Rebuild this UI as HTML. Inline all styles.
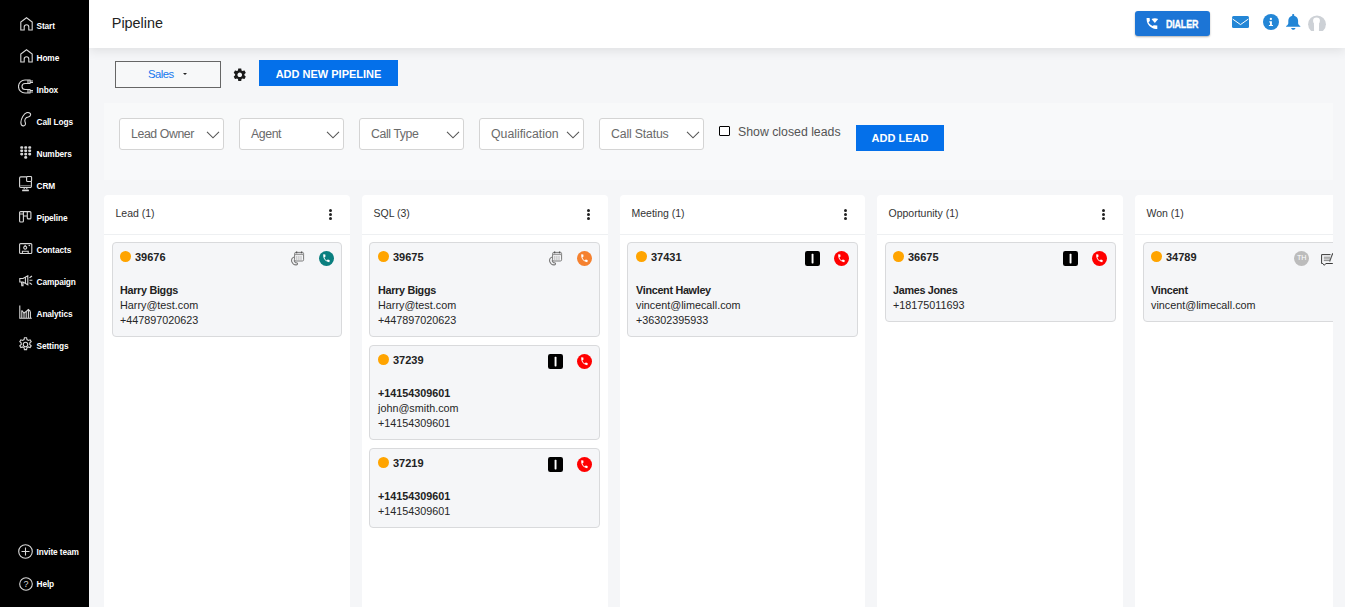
<!DOCTYPE html>
<html><head><meta charset="utf-8">
<style>
*{box-sizing:border-box;margin:0;padding:0}
html,body{width:1345px;height:607px;overflow:hidden;background:#f5f6f8;font-family:"Liberation Sans",sans-serif;color:#222}
#side{position:absolute;left:0;top:0;width:89px;height:607px;background:#000}
.si{position:absolute;line-height:0}
.sl{position:absolute;left:36.5px;height:12px;line-height:12px;color:#fff;font-weight:bold;font-size:8.3px;white-space:nowrap;letter-spacing:-0.1px}
#hdr{position:absolute;left:89px;top:0;width:1256px;height:48px;background:#fff;box-shadow:0 3px 10px rgba(0,0,0,.09);z-index:2}
#title{position:absolute;left:22.8px;top:14.6px;font-size:14.4px;line-height:16px;color:#222}
#dialer{position:absolute;left:1046px;top:11px;width:75px;height:25px;background:#1c75d6;border-radius:3px;box-shadow:0 1px 2px rgba(0,0,0,.3);color:#fff;font-weight:bold;font-size:10.5px;letter-spacing:-0.2px}
#dialer span{position:absolute;left:30.5px;top:7px;line-height:12px;transform:scaleX(0.85);transform-origin:0 0;-webkit-text-stroke:0.3px #fff}
#dialer svg{position:absolute;left:10.5px;top:7px}
.hi{position:absolute;line-height:0}
#main{position:absolute;left:89px;top:48px;width:1256px;height:559px;background:#f5f6f8}
.sales{position:absolute;left:26px;top:13px;width:106px;height:27px;border:1px solid #666;background:#f7f8f9}
.sales span{position:absolute;left:32px;top:5.5px;font-size:11.3px;line-height:13px;color:#1577ee;letter-spacing:-0.5px}
.sales i{position:absolute;left:67px;top:11.2px;width:0;height:0;border-left:2.8px solid transparent;border-right:2.8px solid transparent;border-top:2.8px solid #222}
.gear{position:absolute;left:143px;top:18.8px;line-height:0}
.btn{position:absolute;background:#0470ea;color:#fff;font-weight:bold;text-align:center}
#filters{position:absolute;left:15px;top:55px;width:1229px;height:77px;background:#f8f9fa}
.dd{position:absolute;top:15px;width:105px;height:32px;background:#fff;border:1px solid #d4d4d4;border-radius:3px;font-size:12.3px;color:#6a6a6a;letter-spacing:-0.4px}
.dd span{position:absolute;left:11px;top:8px;line-height:14px;white-space:nowrap}
.dd svg{position:absolute;left:86px;top:11.8px}
.chk{position:absolute;left:615px;top:23px;width:11px;height:10px;border:1px solid #000;border-radius:1px;background:#fff}
.chkl{position:absolute;left:634px;top:21.8px;font-size:12.3px;line-height:14px;color:#555}
#cols{position:absolute;left:15px;top:147px;width:1229px;height:412px;overflow:hidden}
.col{position:absolute;top:0;height:420px;background:#fff;border-radius:4px}
.colh{position:absolute;left:0;top:0;width:100%;height:40px;border-bottom:1px solid #eef0f2}
.colh .t{position:absolute;left:11.5px;top:12px;font-size:10.5px;line-height:13px;color:#333;white-space:nowrap}
.kebab{position:absolute;right:18px;top:14px;width:3px;height:11px}
.kebab i{display:block;width:3px;height:3px;border-radius:50%;background:#222;margin-bottom:1px}
.card{position:absolute;left:8px;width:230px;background:#f5f6f8;border:1px solid #d9dadc;border-radius:4px}
.dot{position:absolute;left:7px;top:8px;width:11.2px;height:11.3px;border-radius:50%;background:#ffa400}
.num{position:absolute;left:22px;top:8px;font-weight:bold;font-size:11px;line-height:13px;color:#222}
.icw{position:absolute;top:8px;line-height:0}
.lines{position:absolute;left:7px;top:40px;font-size:10.8px;line-height:15px;color:#262626;white-space:nowrap}
.lines b{color:#222;letter-spacing:-0.3px}
</style></head><body>
<div id="side">
<div class="si" style="left:19.5px;top:16.8px"><svg width="13" height="14" viewBox="0 0 13 14"><path fill="none" stroke="#d8d8d8" stroke-width="1.1" d="M0.8 13 V5 L6.5 0.8 L12.2 5 V13 H8.8 V10 A2.3 2.3 0 0 0 4.2 10 V13 Z"/></svg></div><div class="sl" style="top:19.8px">Start</div>
<div class="si" style="left:19.5px;top:48.8px"><svg width="13" height="14" viewBox="0 0 13 14"><path fill="none" stroke="#d8d8d8" stroke-width="1.1" d="M0.8 13 V5 L6.5 0.8 L12.2 5 V13 H8.8 V10 A2.3 2.3 0 0 0 4.2 10 V13 Z"/></svg></div><div class="sl" style="top:51.8px">Home</div>
<div class="si" style="left:17.5px;top:79.3px"><svg width="16" height="15" viewBox="0 0 16 15"><path fill="none" stroke="#d8d8d8" stroke-width="1.1" d="M12 1 H7 A6.3 6.3 0 0 0 7 14 H12 V10.5 H7 A3 3 0 0 1 7 4.5 H12 Z"/><path fill="none" stroke="#d8d8d8" stroke-width="1.1" d="M10 1 V4.5 M10 10.5 V14 M12 2 H15 M12 3.5 H15 M12 11.5 H15 M12 13 H15"/></svg></div><div class="sl" style="top:83.8px">Inbox</div>
<div class="si" style="left:20px;top:112.3px"><svg width="12" height="15" viewBox="0 0 12 15"><path fill="none" stroke="#d8d8d8" stroke-width="1.1" d="M7 0.6 C9 0.3 10.8 1.2 10.6 2.8 C10.4 4.3 9 5 7.6 5.2 L6.3 5.6 C5.2 6.5 4.6 8.2 5 9.6 L5.4 11 C5.8 12.5 4.8 14 3.4 13.9 C1.8 13.8 0.8 12.2 0.9 10.3 C1.1 6.8 3.6 1.8 7 0.6 Z"/></svg></div><div class="sl" style="top:115.8px">Call Logs</div>
<div class="si" style="left:20px;top:145.8px"><svg width="12" height="13" viewBox="0 0 12 13"><rect x="0.2" y="0.2" width="3" height="2.6" rx="1.1" fill="#d8d8d8"/><rect x="0.2" y="3.5" width="3" height="2.6" rx="1.1" fill="#d8d8d8"/><rect x="0.2" y="6.8" width="3" height="2.6" rx="1.1" fill="#d8d8d8"/><rect x="4.2" y="0.2" width="3" height="2.6" rx="1.1" fill="#d8d8d8"/><rect x="4.2" y="3.5" width="3" height="2.6" rx="1.1" fill="#d8d8d8"/><rect x="4.2" y="6.8" width="3" height="2.6" rx="1.1" fill="#d8d8d8"/><rect x="8.2" y="0.2" width="3" height="2.6" rx="1.1" fill="#d8d8d8"/><rect x="8.2" y="3.5" width="3" height="2.6" rx="1.1" fill="#d8d8d8"/><rect x="8.2" y="6.8" width="3" height="2.6" rx="1.1" fill="#d8d8d8"/><rect x="4.2" y="10.1" width="3" height="2.6" rx="1.3" fill="#d8d8d8"/></svg></div><div class="sl" style="top:147.8px">Numbers</div>
<div class="si" style="left:19px;top:176.3px"><svg width="14" height="16" viewBox="0 0 14 16"><path fill="none" stroke="#d8d8d8" stroke-width="1.1" d="M7.6 0.9 H1.8 A1.2 1.2 0 0 0 0.6 2.1 V10.3 A1.2 1.2 0 0 0 1.8 11.5 H11.2 A1.2 1.2 0 0 0 12.4 10.3 V5.4"/><rect fill="none" stroke="#d8d8d8" stroke-width="1.1" x="7.6" y="0.5" width="5" height="5" rx="1"/><path d="M1.2 9.8 H11.8" stroke="#9a9a9a" stroke-width="1"/><path fill="none" stroke="#d8d8d8" stroke-width="1.1" d="M5.2 11.8 V13 M7.8 11.8 V13"/><path d="M3.9 14.4 H9.1" stroke="#d8d8d8" stroke-width="1.7" stroke-linecap="round"/></svg></div><div class="sl" style="top:179.8px">CRM</div>
<div class="si" style="left:19px;top:211.3px"><svg width="13" height="12" viewBox="0 0 13 12"><path fill="none" stroke="#d8d8d8" stroke-width="1.1" d="M1.6 0.6 H10.9 A1 1 0 0 1 11.9 1.6 V6.9 A1 1 0 0 1 10.9 7.9 H9.3 A1 1 0 0 1 8.3 6.9 V0.6 M8.3 4.2 A0.8 0.8 0 0 1 7.5 5 H5.2 A0.8 0.8 0 0 1 4.4 4.2 V0.6 M4.4 10 A1 1 0 0 1 3.4 11 H1.6 A1 1 0 0 1 0.6 10 V1.6 A1 1 0 0 1 1.6 0.6 M0.8 3 H4.2 M4.4 2 V10.6"/></svg></div><div class="sl" style="top:211.8px">Pipeline</div>
<div class="si" style="left:18.8px;top:243.3px"><svg width="14" height="12" viewBox="0 0 14 12"><rect fill="none" stroke="#d8d8d8" stroke-width="1.1" x="0.6" y="0.6" width="12.2" height="9.9" rx="1"/><path fill="none" stroke="#d8d8d8" stroke-width="1.1" d="M6.2 2.6 L7.6 4.1 A1.5 1.5 0 1 1 4.8 4.1 Z"/><path fill="none" stroke="#d8d8d8" stroke-width="1.1" d="M3.4 10.4 V8.2 H9.2 V10.4"/><circle cx="10.3" cy="2.5" r="0.8" fill="#d8d8d8"/></svg></div><div class="sl" style="top:243.8px">Contacts</div>
<div class="si" style="left:18.5px;top:275.0px"><svg width="14" height="12" viewBox="0 0 14 12"><path fill="none" stroke="#d8d8d8" stroke-width="1.1" d="M0.8 3.5 H4 L8.8 0.8 V9.8 L4 7 H0.8 Z M2.5 7 L2.8 10.8 H4 L4 7"/><path fill="none" stroke="#d8d8d8" stroke-width="1.1" d="M6.4 2 V8.5 M10.5 2.8 L13 1 M10.5 5.3 H13.4 M10.5 7.8 L13 9.6"/></svg></div><div class="sl" style="top:275.8px">Campaign</div>
<div class="si" style="left:19px;top:305.3px"><svg width="13" height="14" viewBox="0 0 13 14"><path fill="none" stroke="#d8d8d8" stroke-width="1.1" d="M0.8 0.5 V13.2 H12.8"/><path fill="none" stroke="#d8d8d8" stroke-width="1.1" d="M2.8 13 V5.5 M5 13 V8 M7.2 13 V6.5 M9.4 13 V4.5 M11.4 13 V6.5"/><path fill="none" stroke="#d8d8d8" stroke-width="1.1" d="M2.8 5.5 L5 8 L7.2 6.5 L9.4 4.5 L11.4 6.5"/></svg></div><div class="sl" style="top:307.8px">Analytics</div>
<div class="si" style="left:17.8px;top:337.3px"><svg width="15" height="15" viewBox="0 0 24 24"><path fill="none" stroke="#d8d8d8" stroke-width="1.8" d="M10.3 1.2 h3.4 l0.6 3 a8 8 0 0 1 2.2 1.3 l2.9-1 1.7 2.9-2.3 2 a8 8 0 0 1 0 2.6 l2.3 2-1.7 2.9-2.9-1 a8 8 0 0 1-2.2 1.3 l-0.6 3 h-3.4 l-0.6-3 a8 8 0 0 1-2.2-1.3 l-2.9 1-1.7-2.9 2.3-2 a8 8 0 0 1 0-2.6 l-2.3-2 1.7-2.9 2.9 1 a8 8 0 0 1 2.2-1.3 z"/><circle cx="12" cy="12" r="3.6" fill="none" stroke="#d8d8d8" stroke-width="1.8"/></svg></div><div class="sl" style="top:339.8px">Settings</div>
<div class="si" style="left:18px;top:544px"><svg width="15" height="15" viewBox="0 0 15 15"><circle fill="none" stroke="#d8d8d8" stroke-width="1.1" cx="7.5" cy="7.5" r="6.8"/><path fill="none" stroke="#d8d8d8" stroke-width="1.1" d="M7.5 3.5 V11.5 M3.5 7.5 H11.5"/></svg></div><div class="sl" style="top:545.8px">Invite team</div>
<div class="si" style="left:18.5px;top:576.5px"><svg width="14" height="14" viewBox="0 0 14 14"><circle fill="none" stroke="#d8d8d8" stroke-width="1.1" cx="7" cy="7" r="6.3"/><text x="7" y="10.3" text-anchor="middle" font-family="Liberation Sans" font-size="9" fill="#d8d8d8">?</text></svg></div><div class="sl" style="top:577.8px">Help</div>
</div>
<div id="hdr"><div id="title">Pipeline</div>
<div id="dialer"><svg width="13" height="12" viewBox="0 0 13 12"><path fill="#fff" d="M0.6 0 H3.6 L3.9 3.1 L2.5 4.3 C3.3 5.9 4.9 7.3 6.6 8 L7.8 7.3 L11.3 7.5 V10.9 H10 C4.8 10.6 0.8 6.4 0.6 1.2 Z"/><path fill="#fff" d="M5.5 1.1 Q8.85 -0.7 12.2 1.1 L8.85 4.9 Z"/></svg><span>DIALER</span></div>
<div class="hi" style="left:1143px;top:16px"><svg width="17" height="12" viewBox="0 0 17 12"><rect x="0" y="0" width="17" height="12" rx="1.5" fill="#2386d6"/><path d="M0.6 3 L8.5 8.6 L16.4 3" fill="none" stroke="#fff" stroke-width="1"/></svg></div>
<div class="hi" style="left:1174px;top:14px"><svg width="16" height="16" viewBox="0 0 16 16"><circle cx="8" cy="8" r="8" fill="#2386d6"/><circle cx="7.9" cy="4.9" r="1.15" fill="#fff"/><path fill="#fff" d="M6.3 7.2 H8.9 V10.9 H10 V12.1 H5.9 V10.9 H7 V8.5 H6.3 Z"/></svg></div>
<div class="hi" style="left:1197px;top:13px"><svg width="15" height="18" viewBox="0 0 15 18"><path fill="#2386d6" d="M6.2 1.8 C6.2 1.2 6.6 1 7.2 1 C7.8 1 8.2 1.2 8.2 1.8 V2.8 C10.6 3.4 12.1 5.4 12.1 7.7 V10.1 C12.1 11.1 12.6 11.9 13.4 12.5 L14.3 13.1 V13.8 H0.1 V13.1 L1 12.5 C1.8 11.9 2.3 11.1 2.3 10.1 V7.7 C2.3 5.4 3.8 3.4 6.2 2.8 Z M5.1 15 H9.5 C9.3 16.1 8.3 16.8 7.3 16.8 C6.3 16.8 5.3 16.1 5.1 15 Z"/></svg></div>
<div class="hi" style="left:1219px;top:14.5px"><svg width="18" height="17" viewBox="0 0 18 17"><circle cx="9" cy="9.3" r="8.9" fill="#cdd1d6"/><ellipse cx="8.5" cy="5.8" rx="3.4" ry="3.3" fill="#fff"/><path d="M5.9 7 H11.1 L10.9 17 H6.1 Z" fill="#fff"/><rect x="0" y="16" width="18" height="2" fill="#fff"/></svg></div>
</div>
<div id="main">
<div class="sales"><span>Sales</span><i></i></div>
<div class="gear"><svg width="15.5" height="15.5" viewBox="0 0 24 24"><path fill="#1a1a1a" d="M19.14,12.94c0.04-0.3,0.06-0.61,0.06-0.94c0-0.32-0.02-0.64-0.07-0.94l2.03-1.58c0.18-0.14,0.23-0.41,0.12-0.61 l-1.92-3.32c-0.12-0.22-0.37-0.29-0.59-0.22l-2.39,0.96c-0.5-0.38-1.03-0.7-1.62-0.94L14.4,2.81c-0.04-0.24-0.24-0.41-0.48-0.41 h-3.84c-0.24,0-0.43,0.17-0.47,0.41L9.25,5.35C8.66,5.59,8.12,5.920,7.63,6.29L5.24,5.33c-0.22-0.08-0.47,0-0.59,0.22L2.74,8.87 C2.620,9.08,2.66,9.34,2.86,9.48l2.03,1.58C4.84,11.36,4.8,11.69,4.8,12s0.02,0.64,0.07,0.94l-2.03,1.58 c-0.18,0.14-0.23,0.41-0.12,0.61l1.92,3.32c0.12,0.22,0.37,0.29,0.59,0.22l2.39-0.96c0.5,0.38,1.03,0.7,1.62,0.94l0.36,2.54 c0.05,0.24,0.24,0.41,0.48,0.41h3.84c0.24,0,0.44-0.17,0.47-0.41l0.36-2.54c0.59-0.24,1.130-0.56,1.62-0.94l2.39,0.96 c0.22,0.08,0.47,0,0.59-0.22l1.92-3.32c0.12-0.22,0.07-0.47-0.12-0.61L19.14,12.94z M12,15.6c-1.98,0-3.6-1.62-3.6-3.6 s1.62-3.6,3.6-3.6s3.6,1.62,3.6,3.6S13.98,15.6,12,15.6z"/></svg></div>
<div class="btn" style="left:170px;top:12px;width:139px;height:26px;font-size:11px;line-height:26px"><span style="position:relative;top:1px">ADD NEW PIPELINE</span></div>
<div id="filters">
<div class="dd" style="left:15px"><span style="letter-spacing:-0.4px">Lead Owner</span><svg width="14" height="9" viewBox="0 0 14 9"><path d="M1 0.8 L7 6.8 L13 0.8" fill="none" stroke="#555" stroke-width="1.1"/></svg></div><div class="dd" style="left:135px"><span style="letter-spacing:-0.4px">Agent</span><svg width="14" height="9" viewBox="0 0 14 9"><path d="M1 0.8 L7 6.8 L13 0.8" fill="none" stroke="#555" stroke-width="1.1"/></svg></div><div class="dd" style="left:255px"><span style="letter-spacing:-0.4px">Call Type</span><svg width="14" height="9" viewBox="0 0 14 9"><path d="M1 0.8 L7 6.8 L13 0.8" fill="none" stroke="#555" stroke-width="1.1"/></svg></div><div class="dd" style="left:375px"><span style="letter-spacing:0px">Qualification</span><svg width="14" height="9" viewBox="0 0 14 9"><path d="M1 0.8 L7 6.8 L13 0.8" fill="none" stroke="#555" stroke-width="1.1"/></svg></div><div class="dd" style="left:495px"><span style="letter-spacing:-0.17px">Call Status</span><svg width="14" height="9" viewBox="0 0 14 9"><path d="M1 0.8 L7 6.8 L13 0.8" fill="none" stroke="#555" stroke-width="1.1"/></svg></div>
<div class="chk"></div><div class="chkl">Show closed leads</div>
<div class="btn" style="left:752px;top:22px;width:88px;height:26px;font-size:11px;line-height:26px">ADD LEAD</div>
</div>
<div id="cols">
<div class="col" style="left:0px;width:246px"><div class="colh"><div class="t">Lead (1)</div><div class="kebab"><i></i><i></i><i></i></div></div><div class="card" style="left:8px;width:230px;top:47px;height:95px"><div class="dot" style="left:7px"></div><div class="num" style="left:22px">39676</div><div class="icw" style="left:177px"><svg class="ic" width="15" height="15" viewBox="0 0 15 15"><rect x="4.6" y="1.4" width="9" height="8.6" rx="1.2" fill="none" stroke="#7a7a7a" stroke-width="1"/><path d="M4.6 3.4 H13.6" stroke="#9a9a9a" stroke-width="1.4"/><path d="M6.8 5 V9.3 M8.9 5 V9.3 M11 5 V9.3" stroke="#aaa" stroke-width="0.8"/><path d="M6.6 0.4 V2.2 M11.6 0.4 V2.2" stroke="#555" stroke-width="1.3"/><path d="M4.2 6 C2.6 6.4 0.9 8.2 1.7 10.6 C2.6 12.8 4.6 14 6.2 13.9 C7.2 13.8 7.8 13 7.4 12.3 C6.9 11.6 6 11.9 5.4 11.5 C4.6 10.9 4.1 9.8 4.3 8.9" fill="none" stroke="#7a7a7a" stroke-width="1.1"/></svg></div><div class="icw" style="left:205.5px"><svg class="ic" width="15" height="15" viewBox="0 0 15 15"><circle cx="7.5" cy="7.5" r="7.5" fill="#0a7f7f"/><g transform="translate(7.4,7.2) rotate(8) scale(0.4) translate(-12,-12)"><path fill="#fff" d="M6.62 10.79c1.44 2.83 3.76 5.140 6.59 6.59l2.2-2.2c.27-.27.67-.36 1.02-.24 1.12.37 2.33.57 3.57.57.55 0 1 .45 1 1V20c0 .55-.45 1-1 1-9.390 0-17-7.61-17-17 0-.55.45-1 1-1h3.5c.55 0 1 .45 1 1 0 1.25.2 2.45.57 3.57.11.35.03.74-.25 1.02l-2.2 2.2z"/></g></svg></div><div class="lines" style="left:7px"><b>Harry Biggs</b><br>Harry@test.com<br>+447897020623</div></div></div>
<div class="col" style="left:258px;width:246px"><div class="colh"><div class="t">SQL (3)</div><div class="kebab"><i></i><i></i><i></i></div></div><div class="card" style="left:7px;width:231px;top:47px;height:95px"><div class="dot" style="left:8px"></div><div class="num" style="left:23px">39675</div><div class="icw" style="left:178px"><svg class="ic" width="15" height="15" viewBox="0 0 15 15"><rect x="4.6" y="1.4" width="9" height="8.6" rx="1.2" fill="none" stroke="#7a7a7a" stroke-width="1"/><path d="M4.6 3.4 H13.6" stroke="#9a9a9a" stroke-width="1.4"/><path d="M6.8 5 V9.3 M8.9 5 V9.3 M11 5 V9.3" stroke="#aaa" stroke-width="0.8"/><path d="M6.6 0.4 V2.2 M11.6 0.4 V2.2" stroke="#555" stroke-width="1.3"/><path d="M4.2 6 C2.6 6.4 0.9 8.2 1.7 10.6 C2.6 12.8 4.6 14 6.2 13.9 C7.2 13.8 7.8 13 7.4 12.3 C6.9 11.6 6 11.9 5.4 11.5 C4.6 10.9 4.1 9.8 4.3 8.9" fill="none" stroke="#7a7a7a" stroke-width="1.1"/></svg></div><div class="icw" style="left:206.5px"><svg class="ic" width="15" height="15" viewBox="0 0 15 15"><circle cx="7.5" cy="7.5" r="7.5" fill="#f5812f"/><g transform="translate(7.4,7.2) rotate(8) scale(0.4) translate(-12,-12)"><path fill="#fff" d="M6.62 10.79c1.44 2.83 3.76 5.140 6.59 6.59l2.2-2.2c.27-.27.67-.36 1.02-.24 1.12.37 2.33.57 3.57.57.55 0 1 .45 1 1V20c0 .55-.45 1-1 1-9.390 0-17-7.61-17-17 0-.55.45-1 1-1h3.5c.55 0 1 .45 1 1 0 1.25.2 2.45.57 3.57.11.35.03.74-.25 1.02l-2.2 2.2z"/></g></svg></div><div class="lines" style="left:8px"><b>Harry Biggs</b><br>Harry@test.com<br>+447897020623</div></div><div class="card" style="left:7px;width:231px;top:150px;height:95px"><div class="dot" style="left:8px"></div><div class="num" style="left:23px">37239</div><div class="icw" style="left:178px"><svg class="ic" width="15" height="15" viewBox="0 0 15 15"><rect x="0" y="0" width="15" height="15" rx="2.2" fill="#000"/><rect x="6.6" y="2.8" width="1.9" height="9.6" rx="0.6" fill="#fff"/></svg></div><div class="icw" style="left:206.5px"><svg class="ic" width="15" height="15" viewBox="0 0 15 15"><circle cx="7.5" cy="7.5" r="7.5" fill="#ff0000"/><g transform="translate(7.4,7.2) rotate(8) scale(0.4) translate(-12,-12)"><path fill="#fff" d="M6.62 10.79c1.44 2.83 3.76 5.140 6.59 6.59l2.2-2.2c.27-.27.67-.36 1.02-.24 1.12.37 2.33.57 3.57.57.55 0 1 .45 1 1V20c0 .55-.45 1-1 1-9.390 0-17-7.61-17-17 0-.55.45-1 1-1h3.5c.55 0 1 .45 1 1 0 1.25.2 2.45.57 3.57.11.35.03.74-.25 1.02l-2.2 2.2z"/></g></svg></div><div class="lines" style="left:8px"><b><span style="letter-spacing:0">+14154309601</span></b><br>john@smith.com<br>+14154309601</div></div><div class="card" style="left:7px;width:231px;top:253px;height:80px"><div class="dot" style="left:8px"></div><div class="num" style="left:23px">37219</div><div class="icw" style="left:178px"><svg class="ic" width="15" height="15" viewBox="0 0 15 15"><rect x="0" y="0" width="15" height="15" rx="2.2" fill="#000"/><rect x="6.6" y="2.8" width="1.9" height="9.6" rx="0.6" fill="#fff"/></svg></div><div class="icw" style="left:206.5px"><svg class="ic" width="15" height="15" viewBox="0 0 15 15"><circle cx="7.5" cy="7.5" r="7.5" fill="#ff0000"/><g transform="translate(7.4,7.2) rotate(8) scale(0.4) translate(-12,-12)"><path fill="#fff" d="M6.62 10.79c1.44 2.83 3.76 5.140 6.59 6.59l2.2-2.2c.27-.27.67-.36 1.02-.24 1.12.37 2.33.57 3.57.57.55 0 1 .45 1 1V20c0 .55-.45 1-1 1-9.390 0-17-7.61-17-17 0-.55.45-1 1-1h3.5c.55 0 1 .45 1 1 0 1.25.2 2.45.57 3.57.11.35.03.74-.25 1.02l-2.2 2.2z"/></g></svg></div><div class="lines" style="left:8px"><b><span style="letter-spacing:0">+14154309601</span></b><br>+14154309601</div></div></div>
<div class="col" style="left:516px;width:245px"><div class="colh"><div class="t">Meeting (1)</div><div class="kebab"><i></i><i></i><i></i></div></div><div class="card" style="left:7px;width:231px;top:47px;height:95px"><div class="dot" style="left:8px"></div><div class="num" style="left:23px">37431</div><div class="icw" style="left:177px"><svg class="ic" width="15" height="15" viewBox="0 0 15 15"><rect x="0" y="0" width="15" height="15" rx="2.2" fill="#000"/><rect x="6.6" y="2.8" width="1.9" height="9.6" rx="0.6" fill="#fff"/></svg></div><div class="icw" style="left:205.5px"><svg class="ic" width="15" height="15" viewBox="0 0 15 15"><circle cx="7.5" cy="7.5" r="7.5" fill="#ff0000"/><g transform="translate(7.4,7.2) rotate(8) scale(0.4) translate(-12,-12)"><path fill="#fff" d="M6.62 10.79c1.44 2.83 3.76 5.140 6.59 6.59l2.2-2.2c.27-.27.67-.36 1.02-.24 1.12.37 2.33.57 3.57.57.55 0 1 .45 1 1V20c0 .55-.45 1-1 1-9.390 0-17-7.61-17-17 0-.55.45-1 1-1h3.5c.55 0 1 .45 1 1 0 1.25.2 2.45.57 3.57.11.35.03.74-.25 1.02l-2.2 2.2z"/></g></svg></div><div class="lines" style="left:8px"><b>Vincent Hawley</b><br>vincent@limecall.com<br>+36302395933</div></div></div>
<div class="col" style="left:773px;width:246px"><div class="colh"><div class="t">Opportunity (1)</div><div class="kebab"><i></i><i></i><i></i></div></div><div class="card" style="left:8px;width:231px;top:47px;height:80px"><div class="dot" style="left:7px"></div><div class="num" style="left:22px">36675</div><div class="icw" style="left:177px"><svg class="ic" width="15" height="15" viewBox="0 0 15 15"><rect x="0" y="0" width="15" height="15" rx="2.2" fill="#000"/><rect x="6.6" y="2.8" width="1.9" height="9.6" rx="0.6" fill="#fff"/></svg></div><div class="icw" style="left:205.5px"><svg class="ic" width="15" height="15" viewBox="0 0 15 15"><circle cx="7.5" cy="7.5" r="7.5" fill="#ff0000"/><g transform="translate(7.4,7.2) rotate(8) scale(0.4) translate(-12,-12)"><path fill="#fff" d="M6.62 10.79c1.44 2.83 3.76 5.140 6.59 6.59l2.2-2.2c.27-.27.67-.36 1.02-.24 1.12.37 2.33.57 3.57.57.55 0 1 .45 1 1V20c0 .55-.45 1-1 1-9.390 0-17-7.61-17-17 0-.55.45-1 1-1h3.5c.55 0 1 .45 1 1 0 1.25.2 2.45.57 3.57.11.35.03.74-.25 1.02l-2.2 2.2z"/></g></svg></div><div class="lines" style="left:7px"><b>James Jones</b><br>+18175011693</div></div></div>
<div class="col" style="left:1031px;width:246px"><div class="colh"><div class="t">Won (1)</div></div><div class="card" style="left:8px;width:230px;top:47px;height:80px"><div class="dot" style="left:7px"></div><div class="num" style="left:22px">34789</div><div class="icw" style="left:150px"><svg class="ic" width="15" height="15" viewBox="0 0 15 15"><circle cx="7.5" cy="7.5" r="7.5" fill="#bcbcbc"/><text x="7.6" y="9.2" text-anchor="middle" font-family="Liberation Sans" font-size="7.2" fill="#fff" letter-spacing="-0.2">TH</text></svg></div><div class="icw" style="left:177px"><svg class="ic" width="15" height="15" viewBox="0 0 15 15"><path d="M11.8 12.5 H4.8 L3.3 14.3 L1.8 12.5 H0.6 V3.6 H9.5" fill="none" stroke="#3a3a3a" stroke-width="1"/><path d="M2.8 6.2 H9 M2.8 7.9 H9 M2.8 9.6 H8.5" stroke="#8a8a8a" stroke-width="1"/><path d="M8.6 10.5 L11.8 2.2" stroke="#555" stroke-width="1.2"/></svg></div><div class="icw" style="left:205.5px"><svg class="ic" width="15" height="15" viewBox="0 0 15 15"><circle cx="7.5" cy="7.5" r="7.5" fill="#ff0000"/><g transform="translate(7.4,7.2) rotate(8) scale(0.4) translate(-12,-12)"><path fill="#fff" d="M6.62 10.79c1.44 2.83 3.76 5.140 6.59 6.59l2.2-2.2c.27-.27.67-.36 1.02-.24 1.12.37 2.33.57 3.57.57.55 0 1 .45 1 1V20c0 .55-.45 1-1 1-9.390 0-17-7.61-17-17 0-.55.45-1 1-1h3.5c.55 0 1 .45 1 1 0 1.25.2 2.45.57 3.57.11.35.03.74-.25 1.02l-2.2 2.2z"/></g></svg></div><div class="lines" style="left:7px"><b>Vincent</b><br>vincent@limecall.com</div></div></div>
</div>
</div>
</body></html>
